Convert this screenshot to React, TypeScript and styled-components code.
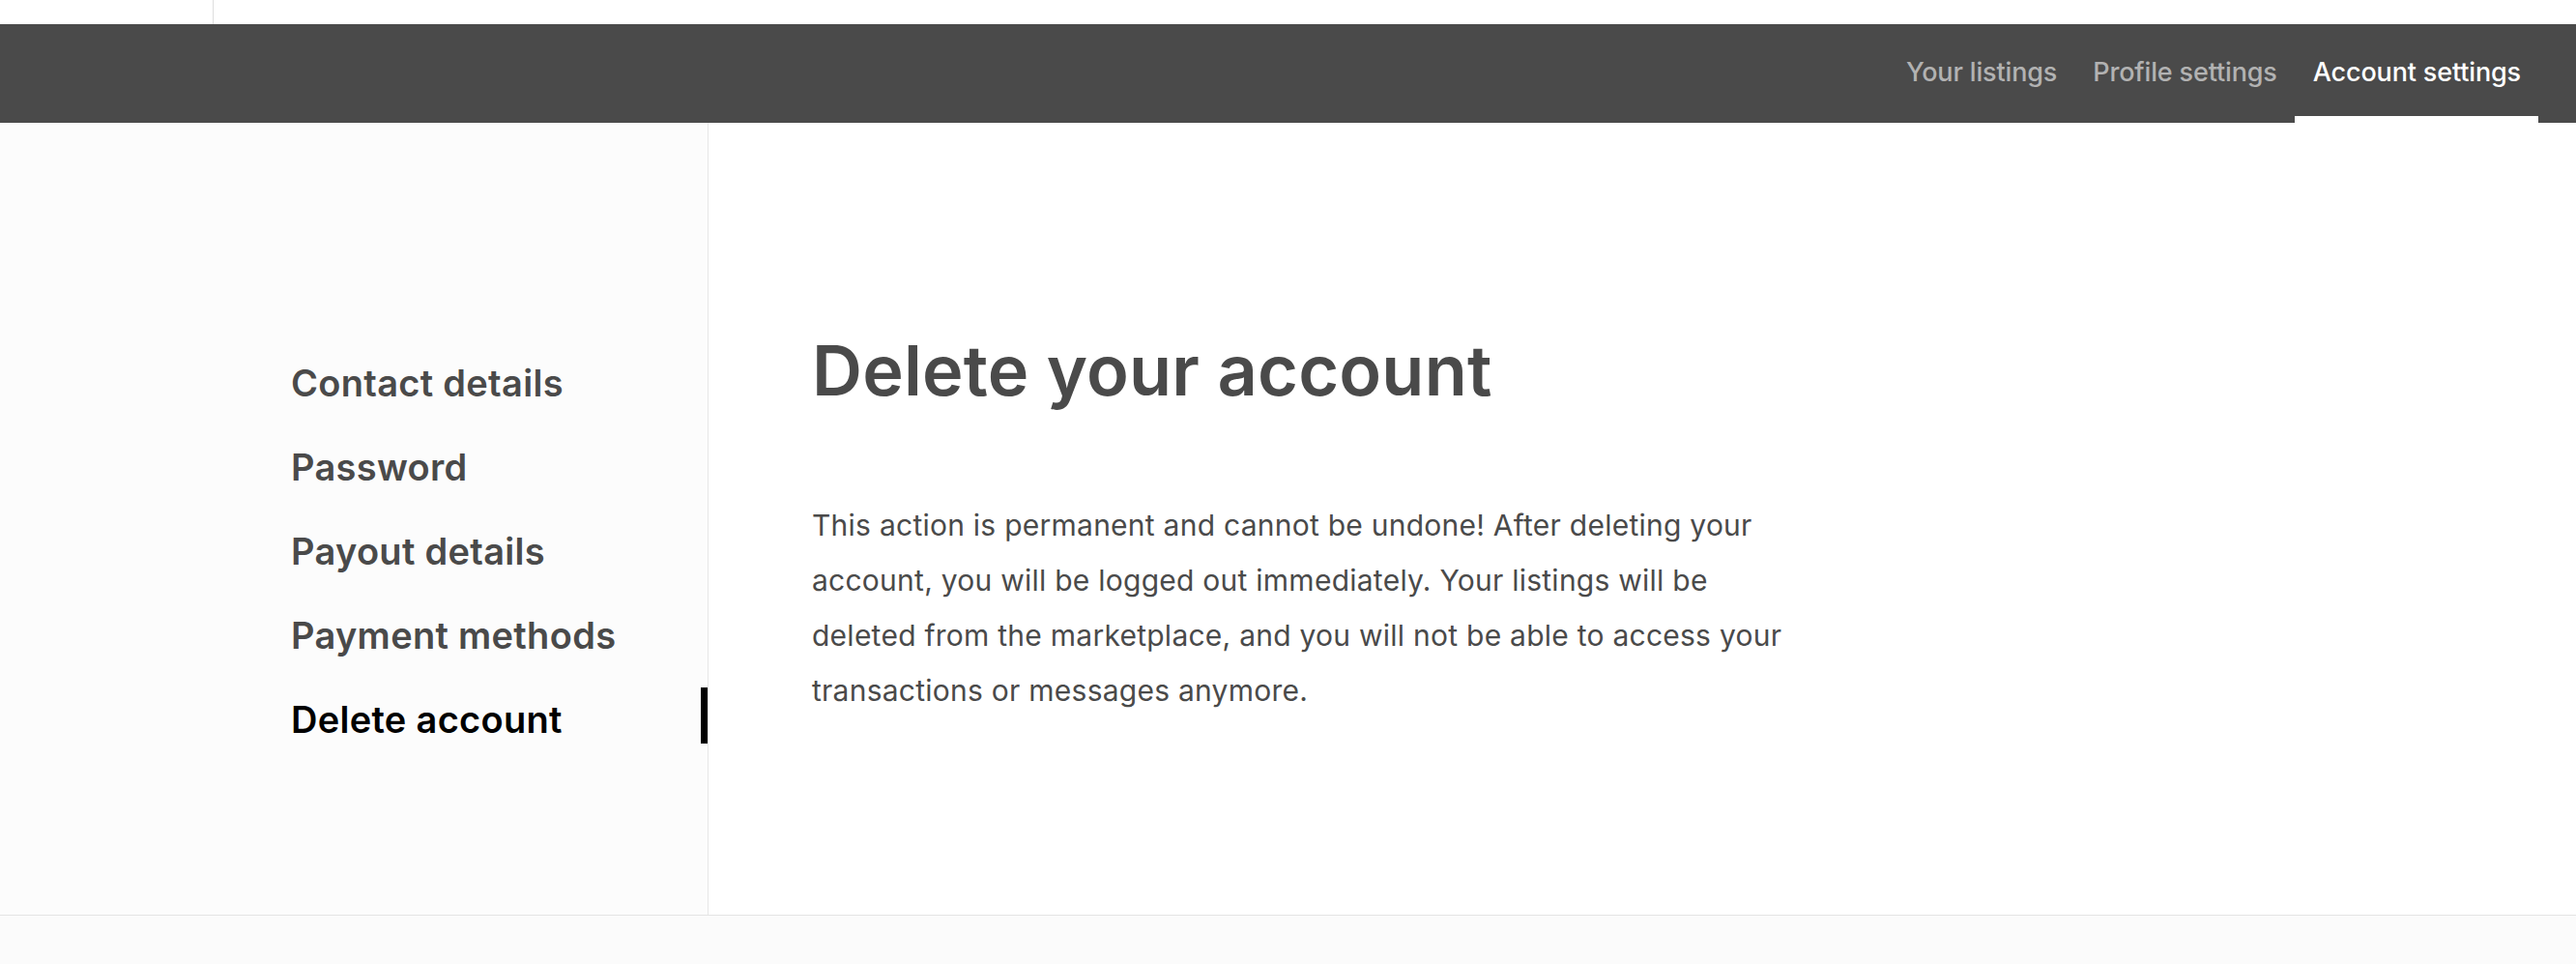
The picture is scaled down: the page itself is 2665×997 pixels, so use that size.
import React from 'react';
import styled, { createGlobalStyle } from 'styled-components';

const GlobalStyle = createGlobalStyle`
    html, body {
        margin: 0;
        padding: 0;
        background: #ffffff;
    }
    body {
        font-family: Inter, "Noto Sans", "Liberation Sans", sans-serif;
        color: #4a4a4a;
        -webkit-font-smoothing: antialiased;
    }
`;

const Page = styled.div`
    display: flex;
    flex-direction: column;
    min-height: 997px;
`;

const TopbarEdge = styled.div`
    display: flex;
    height: 25px;
    background: #ffffff;
`;

const LogoSlot = styled.div`
    width: 220px;
    border-right: 1px solid #dedede;
`;

const UserNav = styled.nav`
    display: flex;
    justify-content: flex-end;
    height: 102px;
    padding-right: 39px;
    background: #4a4a4a;
`;

const Tab = styled.a<{ $active?: boolean }>`
    display: flex;
    align-items: flex-start;
    padding: 33px 18px 0 19px;
    box-sizing: border-box;
    font-size: 27px;
    line-height: 34px;
    font-weight: 500;
    letter-spacing: -0.15px;
    color: ${(p) => (p.$active ? '#ffffff' : '#b2b2b2')};
    border-bottom: 7px solid ${(p) => (p.$active ? '#ffffff' : 'transparent')};
    cursor: pointer;
`;

const Body = styled.div`
    display: flex;
    flex: 1;
`;

const SideNav = styled.aside`
    width: 733px;
    box-sizing: border-box;
    padding-top: 236px;
    background: #fcfcfc;
    border-right: 1px solid #e7e7e7;
    display: flex;
    flex-direction: column;
    gap: 29px;
`;

const SideItem = styled.a<{ $active?: boolean }>`
    display: flex;
    align-items: center;
    height: 58px;
    box-sizing: border-box;
    padding: 8px 0 0 301px;
    font-size: 38px;
    font-weight: 600;
    letter-spacing: 0.3px;
    color: ${(p) => (p.$active ? '#000000' : '#4a4a4a')};
    border-right: 7px solid ${(p) => (p.$active ? '#000000' : 'transparent')};
    cursor: pointer;
`;

const Main = styled.main`
    flex: 1;
    padding: 216px 0 0 107px;
`;

const Title = styled.h1`
    margin: 0;
    font-size: 72px;
    line-height: 80px;
    font-weight: 600;
    letter-spacing: 0.2px;
    color: #4a4a4a;
`;

const Message = styled.p`
    max-width: 1015px;
    margin: 92px 0 0;
    font-size: 30px;
    line-height: 57px;
    font-weight: 400;
    letter-spacing: 0.25px;
    color: #4a4a4a;
`;

const Footer = styled.footer`
    height: 50px;
    background: #fbfbfb;
    border-top: 1px solid #e4e4e4;
`;

const tabs = [
    { label: 'Your listings' },
    { label: 'Profile settings' },
    { label: 'Account settings', active: true },
];

const sideLinks = [
    { label: 'Contact details' },
    { label: 'Password' },
    { label: 'Payout details' },
    { label: 'Payment methods' },
    { label: 'Delete account', active: true },
];

const App: React.FC = () => {
    return (
        <>
            <GlobalStyle />
            <Page>
                <TopbarEdge>
                    <LogoSlot />
                </TopbarEdge>
                <UserNav>
                    {tabs.map((t) => (
                        <Tab key={t.label} $active={t.active}>
                            {t.label}
                        </Tab>
                    ))}
                </UserNav>
                <Body>
                    <SideNav>
                        {sideLinks.map((l) => (
                            <SideItem key={l.label} $active={l.active}>
                                {l.label}
                            </SideItem>
                        ))}
                    </SideNav>
                    <Main>
                        <Title>Delete your account</Title>
                        <Message>
                            This action is permanent and cannot be undone! After deleting your
                            account, you will be logged out immediately. Your listings will be
                            deleted from the marketplace, and you will not be able to access your
                            transactions or messages anymore.
                        </Message>
                    </Main>
                </Body>
                <Footer />
            </Page>
        </>
    );
};

export default App;
